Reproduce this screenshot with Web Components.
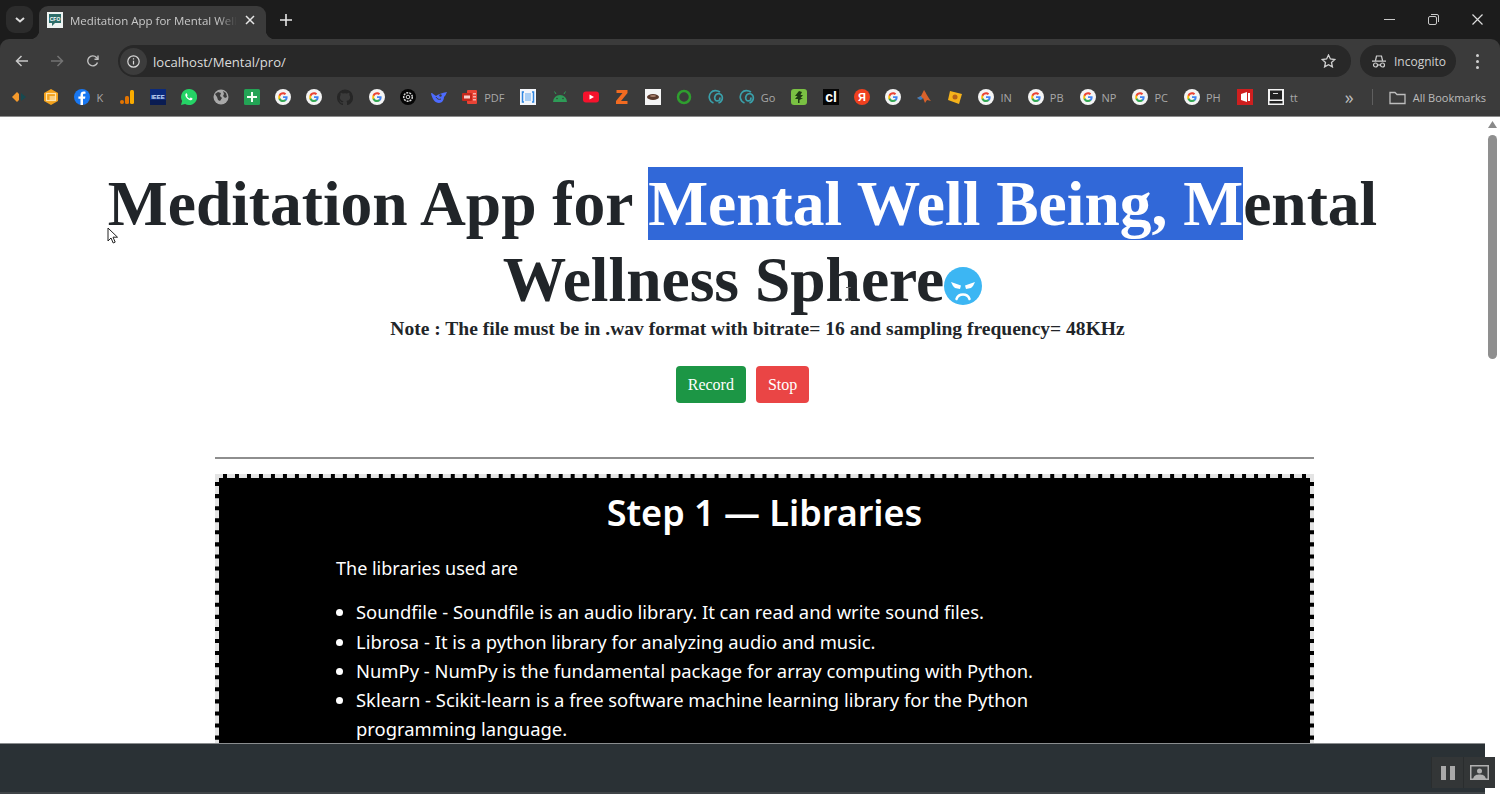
<!DOCTYPE html>
<html>
<head>
<meta charset="utf-8">
<title>Meditation App for Mental Well Being</title>
<style>
  html, body { margin: 0; padding: 0; width: 1500px; height: 794px; overflow: hidden; background: #fff; }
</style>
</head>
<body>
<browser-window>
  <tab-strip slot="tabs" title-text="Meditation App for Mental Well"></tab-strip>
  <nav-toolbar slot="toolbar" url="localhost/Mental/pro/"></nav-toolbar>
  <bookmarks-bar slot="bookmarks"></bookmarks-bar>
  <meditation-page slot="page"></meditation-page>
  <page-scrollbar slot="scrollbar"></page-scrollbar>
  <recorder-bar slot="overlay"></recorder-bar>
</browser-window>

<script>
// Google "G" used by many bookmarks
const G = `<svg viewBox="0 0 16 16" width="16" height="16"><circle cx="8" cy="8" r="8" fill="#f4f4f4"/><path d="M12.6 8.2c0-.4 0-.7-.1-1H8v1.900h2.600c-.1.600-.5 1.200-1 1.500v1.200h1.600c1-.9 1.400-2.100 1.400-3.600z" fill="#4285f4"/><path d="M8 13c1.300 0 2.400-.4 3.200-1.200l-1.600-1.200c-.4.300-1 .5-1.600.5-1.300 0-2.300-.8-2.700-2H3.700v1.300C4.500 12 6.100 13 8 13z" fill="#34a853"/><path d="M5.300 9.100c-.2-.6-.2-1.200 0-1.800V6H3.700c-.6 1.300-.6 2.900 0 4.400z" fill="#fbbc05"/><path d="M8 5.300c.7 0 1.300.2 1.800.7l1.400-1.400C10.300 3.800 9.200 3.300 8 3.300c-1.900 0-3.500 1-4.300 2.700l1.600 1.300c.4-1.200 1.400-2 2.700-2z" fill="#ea4335"/></svg>`;

const svg = (body) => `<svg viewBox="0 0 16 16" width="16" height="16">${body}</svg>`;

const ICONS = {
  google: G,
  diamonds: svg('<path d="M0 8l5-5 2 2v6l-2 2z" fill="#f59a2c"/><path d="M9 4l5 4-5 4z" fill="#17494f"/>'),
  slides: svg('<path d="M8 0l7 4v8l-7 4-7-4V4z" fill="#f3a11b"/><rect x="3.500" y="4.500" width="9" height="7" fill="none" stroke="#fde3ad" stroke-width="1.200"/><rect x="6.500" y="7" width="6" height="4.500" fill="#fde3ad" opacity=".7"/>'),
  facebook: svg('<circle cx="8" cy="8" r="8" fill="#1877f2"/><path d="M9 16V9.800h2l.4-2.400H9V6c0-.7.300-1.200 1.300-1.200h1.200V2.700C11 2.600 10.400 2.500 9.800 2.500c-2 0-3.300 1.200-3.300 3.300v1.600H4.400v2.400h2.100V16z" fill="#fff"/>'),
  analytics: svg('<rect x="11" y="1" width="4" height="14" rx="1.500" fill="#f9ab00"/><rect x="6" y="7" width="4" height="8" rx="1.500" fill="#e37400"/><circle cx="3" cy="13" r="2" fill="#e37400"/>'),
  ieee: `<svg viewBox="0 0 16 16" width="16" height="16"><rect width="16" height="16" fill="#0b2a7c"/><rect y="11" width="16" height="5" fill="#0a1c52"/><text x="8" y="9.500" font-family="Liberation Sans" font-size="6" font-weight="700" fill="#cfe0ff" text-anchor="middle">IEEE</text></svg>`,
  whatsapp: svg('<path d="M8 0a8 8 0 0 0-6.900 12L0 16l4.100-1.100A8 8 0 1 0 8 0z" fill="#25d366"/><path d="M5.700 4.200c-.2 0-.5.100-.8.400-.8.800-.8 2 .1 3.400 1.100 1.700 2.400 2.700 4 3.200 1.100.3 2-.1 2.400-.9.200-.4.200-.8.100-.9l-1.600-.8c-.2-.1-.3 0-.5.200l-.5.600c-.1.200-.3.200-.5.100-1-.4-1.700-1-2.300-2-.1-.2-.1-.3.100-.5l.3-.4c.1-.2.100-.3 0-.5l-.6-1.500c-.1-.3-.3-.4-.6-.4z" fill="#fff"/>'),
  globe: svg('<circle cx="8" cy="8" r="7.500" fill="#a9a9a9"/><path d="M2 5l3-2 3 1-1 3 2 2-2 3-2-1-1-3zM10 2l3 2 1 4-2 1-2-2 1-2z" fill="#3c3c3c"/>'),
  sheet: svg('<rect width="16" height="16" rx="1.500" fill="#23a455"/><path d="M7 3h2v4h4v2H9v4H7V9H3V7h4z" fill="#f4fff6"/>'),
  github: svg('<path d="M8 .5a8 8 0 0 0-2.500 15.600c.4 0 .5-.2.5-.4v-1.400c-2.200.5-2.700-1-2.700-1-.4-.9-.9-1.200-.9-1.200-.7-.5.100-.5.100-.5.800.1 1.200.8 1.200.8.700 1.200 1.900.9 2.300.7.100-.5.300-.9.500-1.100-1.800-.2-3.600-.9-3.600-4 0-.9.300-1.600.8-2.100-.1-.2-.4-1 .1-2.100 0 0 .7-.2 2.200.8a7.600 7.600 0 0 1 4 0c1.500-1 2.200-.8 2.200-.8.400 1.100.2 1.900.1 2.100.5.600.8 1.300.8 2.100 0 3.100-1.900 3.700-3.700 3.900.3.300.6.800.6 1.500v2.300c0 .2.100.5.600.4A8 8 0 0 0 8 .5z" fill="#262626"/>'),
  openai: svg('<circle cx="8" cy="8" r="8" fill="#050505"/><circle cx="8" cy="8" r="4.300" fill="none" stroke="#d8d8d8" stroke-width="1.500" stroke-dasharray="2 1"/><circle cx="8" cy="8" r="1.800" fill="none" stroke="#d8d8d8"/>'),
  deepseek: svg('<path d="M0 4c2 0 3 2 5 3 2-2 6-3 11-4-1 2-1 3-3 5 0 3-2 6-5 6-4 0-7-4-8-10z" fill="#4d6bfe"/><circle cx="9.500" cy="6.500" r="1.200" fill="#3c3c3c"/><path d="M5 8c1 2 3 3 5 2" stroke="#3c3c3c" fill="none"/>'),
  pdf: svg('<rect x="5" y="1" width="10" height="14" rx="1" fill="#e94335"/><rect x="0" y="4" width="10" height="8" rx="1" fill="#c5281c"/><rect x="11" y="4" width="3" height="1.500" fill="#f7b0a9"/><rect x="11" y="7" width="3" height="1.500" fill="#f7b0a9"/><rect x="11" y="10" width="3" height="1.500" fill="#f7b0a9"/><rect x="2" y="6.500" width="6" height="3" fill="#f9cfcb"/>'),
  brackets: svg('<rect width="16" height="16" fill="#f3f6fb"/><path d="M4 3H2.500v10H4M12 3h1.500v10H12" fill="none" stroke="#2f86e0" stroke-width="1.500"/><rect x="5" y="4" width="6" height="8" fill="#a9cff5"/>'),
  android: svg('<path d="M1 13a7 7 0 0 1 14 0z" fill="#2e9b57"/><path d="M4 5L2.500 2.500M12 5l1.500-2.500" stroke="#2e9b57" stroke-width="1"/><circle cx="5" cy="9.500" r=".8" fill="#3c3c3c"/><circle cx="11" cy="9.500" r=".8" fill="#3c3c3c"/>'),
  youtube: svg('<rect y="2.500" width="16" height="11" rx="3" fill="#f6122c"/><path d="M6.500 5.500L11 8l-4.500 2.500z" fill="#fff"/>'),
  zed: svg('<path d="M2.500 1h11v3L7 12h6.500v3H2v-3l6.500-8h-6z" fill="#f26b21"/>'),
  bowl: svg('<rect width="16" height="16" fill="#f5f5f5"/><ellipse cx="8" cy="8" rx="6" ry="3" fill="#5b3a2c"/><ellipse cx="8" cy="7" rx="3" ry="1" fill="#a8806c"/>'),
  ring: svg('<circle cx="8" cy="8" r="6" fill="none" stroke="#2f9e2f" stroke-width="2.500"/>'),
  swirl: svg('<path d="M5.500 14A6.500 6.500 0 0 1 3 3.500C5 1 9 1 12 3M10.500 14c3-1 4.500-4 3.500-7-.6-1.800-3-3-5-2-2.200 1.100-3 4-1.600 6 .9 1.200 2.800 1.300 3.800.2.800-.9.800-2 .3-2.700" fill="none" stroke="#3aa0aa" stroke-width="1.700"/>'),
  leaf: svg('<rect width="16" height="16" rx="3" fill="#7ac143"/><path d="M8 2L4 7h2.500L4 10h3v4h1.500v-3L12 9H9.500L12 6H9.500L11 3z" fill="#1f3a14"/>'),
  cl: `<svg viewBox="0 0 16 16" width="16" height="16"><rect width="16" height="16" fill="#050505"/><text x="8" y="13" font-family="Liberation Sans" font-size="14" font-weight="700" fill="#fff" text-anchor="middle">cl</text></svg>`,
  yandex: `<svg viewBox="0 0 16 16" width="16" height="16"><circle cx="8" cy="8" r="8" fill="#f0401f"/><text x="8" y="12" font-family="Liberation Sans" font-size="11" font-weight="700" fill="#fff" text-anchor="middle">Я</text></svg>`,
  matlab: svg('<path d="M1 9l4-2 3-6c1 1 3 6 7 11l-4-1-2 3-2-5z" fill="#d9622b"/><path d="M1 9l4-2 2 3-3 1z" fill="#3f7dbb"/>'),
  note: svg('<path d="M3 2l12 3-3 10-11-4z" fill="#f5b21b"/><circle cx="8" cy="8" r="2.500" fill="#b5611a"/>'),
  office: svg('<rect width="16" height="16" fill="#cf1f1f"/><path d="M4 5l6-2v10l-6-2zM11 4h2v8h-2z" fill="#fff"/>'),
  screen: svg('<rect width="16" height="16" fill="#f3f3f3"/><rect x="2" y="1.500" width="12" height="9" fill="#222"/><rect x="1.500" y="12" width="13" height="2.500" fill="#222"/><rect x="5" y="4" width="5" height="1" fill="#ddd"/>')
};

class BookmarkItem extends HTMLElement {
  constructor() {
    super();
    this.attachShadow({ mode: 'open' });
  }
  connectedCallback() {
    const icon = ICONS[this.getAttribute('icon')] || '';
    const label = this.getAttribute('label');
    this.shadowRoot.innerHTML = `
      <style>
        :host { display: flex; align-items: center; gap: 6px; height: 16px; flex: none; }
        svg { display: block; }
        span { font: 11px "Open Sans", sans-serif; color: #a8a8a8; white-space: nowrap; padding-right: .8px; }
      </style>
      ${icon}${label ? `<span>${label}</span>` : ''}
    `;
  }
}
customElements.define('bookmark-item', BookmarkItem);

class BookmarksBar extends HTMLElement {
  constructor() {
    super();
    this.attachShadow({ mode: 'open' });
  }
  connectedCallback() {
    const items = [
      ['diamonds'], ['slides'], ['facebook', 'K'], ['analytics'], ['ieee'], ['whatsapp'], ['globe'], ['sheet'],
      ['google'], ['google'], ['github'], ['google'], ['openai'], ['deepseek'], ['pdf', 'PDF'], ['brackets'],
      ['android'], ['youtube'], ['zed'], ['bowl'], ['ring'], ['swirl'], ['swirl', 'Go'], ['leaf'], ['cl'],
      ['yandex'], ['google'], ['matlab'], ['note'], ['google', 'IN'], ['google', 'PB'], ['google', 'NP'],
      ['google', 'PC'], ['google', 'PH'], ['office'], ['screen', 'tt']
    ];
    this.shadowRoot.innerHTML = `
      <style>
        :host { display: flex; align-items: center; height: 28px; padding: 0 14px 5px 12px; background: #3b3b3b; border-bottom: 1px solid #8c8c8c; box-sizing: content-box; }
        .items { display: flex; align-items: center; gap: 15.200px; flex: 1; }
        .more { color: #bdbdbd; font: 18px "Open Sans", sans-serif; margin-right: 18px; }
        .sep { width: 1px; height: 16px; background: #5f5f5f; margin-right: 16px; }
        .all { display: flex; align-items: center; gap: 7px; font: 11px "Open Sans", sans-serif; color: #bdbdbd; }
      </style>
      <div class="items">
        ${items.map(([i, l]) => `<bookmark-item icon="${i}"${l ? ` label="${l}"` : ''}></bookmark-item>`).join('')}
      </div>
      <span class="more">»</span>
      <span class="sep"></span>
      <span class="all">
        <svg width="17" height="15" viewBox="0 0 17 15" fill="none" stroke="#bdbdbd" stroke-width="1.300"><path d="M1 2.500h5l2 2h8v9H1z"/></svg>
        All Bookmarks
      </span>
    `;
  }
}
customElements.define('bookmarks-bar', BookmarksBar);

class TabStrip extends HTMLElement {
  constructor() {
    super();
    this.attachShadow({ mode: 'open' });
  }
  connectedCallback() {
    const title = this.getAttribute('title-text');
    this.shadowRoot.innerHTML = `
      <style>
        :host { display: flex; align-items: flex-end; height: 39px; background: #1c1c1c; padding-left: 6px; box-sizing: border-box; }
        .list { width: 27px; height: 27px; margin-bottom: 6px; border-radius: 9px; background: #2c2c2c; display: flex; align-items: center; justify-content: center; }
        .tab { position: relative; width: 227px; height: 33px; margin-left: 6px; background: #3b3b3b; border-radius: 9px 9px 0 0; display: flex; align-items: center; padding: 0 11px 5px 8px; box-sizing: border-box; }
        .tab::before, .tab::after { content: ""; position: absolute; bottom: 0; width: 9px; height: 9px; background: radial-gradient(circle at 0 0, transparent 9px, #3b3b3b 9.500px); }
        .tab::before { left: -9px; }
        .tab::after { right: -9px; transform: scaleX(-1); }
        .fav { width: 16px; height: 16px; flex: none; }
        .title { flex: 1; margin-left: 7px; overflow: hidden; white-space: nowrap; font: 11.500px "Open Sans", sans-serif; color: #c9c9c9; -webkit-mask-image: linear-gradient(90deg, #000 88%, transparent 100%); mask-image: linear-gradient(90deg, #000 88%, transparent 100%); }
        .close { margin-left: 8px; flex: none; display: block; }
        .plus { margin-left: 14px; margin-bottom: 13px; display: block; }
        .spacer { flex: 1; }
        .win { display: flex; align-self: stretch; align-items: center; gap: 33px; padding-right: 17px; padding-bottom: 1px; }
      </style>
      <div class="list"><svg width="10" height="6" viewBox="0 0 10 6" fill="none" stroke="#dcdcdc" stroke-width="2"><path d="M1 1l4 3.500L9 1"/></svg></div>
      <div class="tab">
        <svg class="fav" viewBox="0 0 16 16"><rect width="16" height="16" fill="#eef3f2"/><path d="M2 2h12v9H8l-3 3v-3H2z" fill="#2d6e6a"/><text x="8" y="8.500" font-family="Liberation Sans" font-size="5" font-weight="700" fill="#fff" text-anchor="middle">CFO</text></svg>
        <span class="title">${title}</span>
        <svg class="close" width="10" height="10" viewBox="0 0 10 10" stroke="#e6e6e6" stroke-width="1.500"><path d="M1 1l8 8M9 1l-8 8"/></svg>
      </div>
      <svg class="plus" width="12" height="12" viewBox="0 0 12 12" stroke="#e6e6e6" stroke-width="1.600"><path d="M6 0v12M0 6h12"/></svg>
      <span class="spacer"></span>
      <div class="win">
        <svg width="11" height="11" viewBox="0 0 11 11" stroke="#c8c8c8"><path d="M0 5.500h11"/></svg>
        <svg width="11" height="11" viewBox="0 0 11 11" fill="none" stroke="#c8c8c8"><rect x=".5" y="2.500" width="8" height="8" rx="1.500"/><path d="M3 .5h6a1.500 1.500 0 0 1 1.500 1.500v6"/></svg>
        <svg width="11" height="11" viewBox="0 0 11 11" stroke="#dcdcdc" stroke-width="1.200"><path d="M.5.5l10 10M10.500.5l-10 10"/></svg>
      </div>
    `;
  }
}
customElements.define('tab-strip', TabStrip);

class NavToolbar extends HTMLElement {
  constructor() {
    super();
    this.attachShadow({ mode: 'open' });
  }
  connectedCallback() {
    const url = this.getAttribute('url');
    this.shadowRoot.innerHTML = `
      <style>
        :host { display: flex; align-items: center; height: 44px; background: #3b3b3b; padding: 0 21px 0 15px; box-sizing: border-box; border-radius: 9px 9px 0 0; }
        .navs { display: flex; align-items: center; gap: 23px; width: 103px; flex: none; }
        svg { display: block; flex: none; }
        .omni { display: flex; align-items: center; flex: 1; height: 32px; background: #282828; border-radius: 16px; padding: 0 15px 0 2px; box-sizing: border-box; }
        .info { width: 27px; height: 27px; border-radius: 50%; background: #3c3c3c; display: flex; align-items: center; justify-content: center; }
        .url { flex: 1; margin: 1px 0 0 6px; font: 13.100px "Open Sans", sans-serif; color: #dcdcdc; }
        .pill { display: flex; align-items: center; gap: 8px; width: 96px; height: 32px; margin-left: 9px; padding-left: 12px; box-sizing: border-box; background: #282828; border-radius: 16px; font: 12px "Open Sans", sans-serif; color: #d0d0d0; flex: none; }
        .menu { margin-left: 20px; }
      </style>
      <div class="navs">
        <svg width="13" height="12" viewBox="0 0 13 12" fill="none" stroke="#c8c8c8" stroke-width="1.500"><path d="M13 6H1.500M6.500 1l-5 5 5 5"/></svg>
        <svg width="13" height="12" viewBox="0 0 13 12" fill="none" stroke="#737373" stroke-width="1.500"><path d="M0 6h11.500M6.500 1l5 5-5 5"/></svg>
        <svg width="12" height="12" viewBox="0 0 12 12" fill="none" stroke="#c0c0c0" stroke-width="1.400"><path d="M10.500 7.500A5 5 0 1 1 9.500 2.500L11 4"/><path d="M11 .5V4.200H7.500" /></svg>
      </div>
      <div class="omni">
        <span class="info"><svg width="13" height="13" viewBox="0 0 13 13" fill="none" stroke="#d8d8d8" stroke-width="1.200"><circle cx="6.500" cy="6.500" r="5.700"/><path d="M6.500 5.800v3.700M6.500 3.300v1.300"/></svg></span>
        <span class="url">${url}</span>
        <svg width="15" height="14" viewBox="0 0 15 14" fill="none" stroke="#d0d0d0" stroke-width="1.300"><path d="M7.500 1l1.900 4 4.400.5-3.300 3 .9 4.400-3.900-2.200-3.900 2.200.9-4.400-3.300-3 4.400-.5z"/></svg>
      </div>
      <div class="pill">
        <svg width="14" height="13" viewBox="0 0 14 13" fill="none" stroke="#d0d0d0" stroke-width="1.200"><path d="M3.500 5.500L4.500 1h5l1 4.500M0 6.200h14"/><circle cx="3.500" cy="10" r="2"/><circle cx="10.500" cy="10" r="2"/><path d="M5.500 10h3"/></svg>
        Incognito
      </div>
      <svg class="menu" width="3" height="15" viewBox="0 0 3 15" fill="#d0d0d0"><circle cx="1.500" cy="1.500" r="1.500"/><circle cx="1.500" cy="7.500" r="1.500"/><circle cx="1.500" cy="13.500" r="1.500"/></svg>
    `;
  }
}
customElements.define('nav-toolbar', NavToolbar);

class ActionButton extends HTMLElement {
  constructor() {
    super();
    this.attachShadow({ mode: 'open' });
  }
  connectedCallback() {
    this.shadowRoot.innerHTML = `
      <style>
        :host { display: block; }
        button { display: block; height: 37px; padding: 0 12px; border: 0; border-radius: 4px; color: #fff; background: var(--btn-bg); font: 16px "Liberation Serif", serif; }
      </style>
      <button><slot></slot></button>
    `;
  }
}
customElements.define('action-button', ActionButton);

class StepCard extends HTMLElement {
  constructor() {
    super();
    this.attachShadow({ mode: 'open' });
  }
  connectedCallback() {
    this.shadowRoot.innerHTML = `
      <style>
        :host { display: block; box-sizing: border-box; background: #000; border: 4px dashed #e4e4e4; color: #fff; font-family: "Noto Sans", sans-serif; padding-bottom: 60px; }
        h2 { margin: 0; padding-top: 11px; text-align: center; font-size: 36px; line-height: 48px; font-weight: 600; }
        .body { margin: 17px 0 0 117px; width: 720px; font-size: 18.400px; line-height: 29.300px; }
        .body ::slotted(p) { margin: 0 0 14px; font-size: 18px; }
        .body ::slotted(ul) { margin: 0; padding-left: 20px; }
      </style>
      <h2>${this.getAttribute('heading')}</h2>
      <div class="body"><slot></slot></div>
    `;
  }
}
customElements.define('step-card', StepCard);

class MeditationPage extends HTMLElement {
  constructor() {
    super();
    this.attachShadow({ mode: 'open' });
  }
  connectedCallback() {
    this.shadowRoot.innerHTML = `
      <style>
        :host { display: block; height: 100%; overflow: hidden; background: #fff; color: #212529; position: relative; }
        h1 { margin: 0; padding-top: 49px; text-align: center; font: 700 63.500px/76px "Liberation Serif", serif; }
        h1 mark { background: #3168d8; color: #fff; padding: 1px 0; }
        .emoji { display: inline-block; vertical-align: -4px; width: 38px; height: 38px; }
        h3 { margin: -1px 0 0 30px; text-align: center; font: 700 19.550px/24px "Liberation Serif", serif; }
        .actions { display: flex; justify-content: center; gap: 10px; margin-top: 25px; }
        .rec { --btn-bg: #1c9645; }
        .stop { --btn-bg: #ea4545; }
        hr { width: 1099px; height: 2px; margin: 54px 0 0 215px; border: 0; background: #8e8e8e; }
        step-card { width: 1099px; margin: 15px 0 0 215px; }
        .pointer { position: absolute; left: 107px; top: 110px; }
        .ibeam { position: absolute; left: 845px; top: 170px; }
      </style>
      <h1><span>Meditation App for </span><mark>Mental Well Being, M</mark><span>ental</span> <span>Wellness Sphere</span><svg class="emoji" viewBox="0 0 38 38"><circle cx="19" cy="19" r="19" fill="#3cb6f3"/><path d="M7 15l10 3.500-1 3.500-5-1-2-2zM31 15l-10 3.500 1 3.500 5-1 2-2z" fill="#fff"/><path d="M12.500 32c2-6 11-6 13 0" fill="none" stroke="#fff" stroke-width="2.500" stroke-linecap="round"/></svg></h1>
      <h3>Note : The file must be in .wav format with bitrate= 16 and sampling frequency= 48KHz</h3>
      <div class="actions">
        <action-button class="rec">Record</action-button>
        <action-button class="stop">Stop</action-button>
      </div>
      <hr>
      <step-card heading="Step 1 — Libraries">
        <p>The libraries used are</p>
        <ul>
          <li>Soundfile - Soundfile is an audio library. It can read and write sound files.</li>
          <li>Librosa - It is a python library for analyzing audio and music.</li>
          <li>NumPy - NumPy is the fundamental package for array computing with Python.</li>
          <li>Sklearn - Scikit-learn is a free software machine learning library for the Python programming language.</li>
        </ul>
      </step-card>
      <svg class="pointer" width="12" height="18" viewBox="0 0 12 18" fill="#fff" stroke="#222" stroke-width="1"><path d="M1 1v13l3-3 2.200 5 2-.9L6 10.200h4.500z"/></svg>
      <svg class="ibeam" width="7" height="14" viewBox="0 0 7 14" fill="none" stroke="#666" stroke-width="1"><path d="M1 .5h5M3.500.5v13M1 13.500h5"/></svg>
    `;
  }
}
customElements.define('meditation-page', MeditationPage);

class PageScrollbar extends HTMLElement {
  constructor() {
    super();
    this.attachShadow({ mode: 'open' });
  }
  connectedCallback() {
    this.shadowRoot.innerHTML = `
      <style>
        :host { display: block; width: 15px; height: 100%; background: #fff; box-sizing: border-box; padding-top: 4px; }
        svg { display: block; margin: 0 auto; }
        .thumb { width: 9px; height: 224px; margin: 7px 0 0 3px; border-radius: 5px; background: #8f8f8f; }
      </style>
      <svg width="9" height="7" viewBox="0 0 9 7" fill="#8a8a8a"><path d="M4.500 0L9 7H0z"/></svg>
      <div class="thumb"></div>
    `;
  }
}
customElements.define('page-scrollbar', PageScrollbar);

class RecorderBar extends HTMLElement {
  constructor() {
    super();
    this.attachShadow({ mode: 'open' });
  }
  connectedCallback() {
    this.shadowRoot.innerHTML = `
      <style>
        :host { display: flex; align-items: center; justify-content: flex-end; position: absolute; left: 0; top: 743px; width: 1485px; height: 51px; box-sizing: border-box; background: #2a3135; border-top: 1px solid #8a8d8f; border-bottom: 2px solid #3f4447; }
        .controls { display: flex; position: absolute; right: -10px; top: 13px; height: 31px; }
        .btn { width: 31px; height: 31px; background: #333637; display: flex; align-items: center; justify-content: center; border-left: 1px solid #2a2d2e; }
      </style>
      <div class="controls">
        <div class="btn"><svg width="14" height="14" viewBox="0 0 14 14" fill="#a9a9a9"><rect x="0" width="5" height="14"/><rect x="9" width="5" height="14"/></svg></div>
        <div class="btn"><svg width="19" height="15" viewBox="0 0 19 15"><rect x=".75" y=".75" width="17.500" height="13.500" fill="#3a3d3e" stroke="#b0b0b0" stroke-width="1.500"/><circle cx="9.500" cy="6" r="2.500" fill="#b0b0b0"/><path d="M3 14c1-4 4-4.500 6.500-4.500S15 10 16 14z" fill="#b0b0b0"/></svg></div>
      </div>
    `;
  }
}
customElements.define('recorder-bar', RecorderBar);

class BrowserWindow extends HTMLElement {
  constructor() {
    super();
    this.attachShadow({ mode: 'open' });
  }
  connectedCallback() {
    this.shadowRoot.innerHTML = `
      <style>
        :host { display: flex; flex-direction: column; position: relative; width: 1500px; height: 794px; overflow: hidden; background: #1c1c1c; }
        .content { display: flex; flex: 1; min-height: 0; background: #fff; }
        ::slotted([slot="page"]) { width: 1485px; }
      </style>
      <slot name="tabs"></slot>
      <slot name="toolbar"></slot>
      <slot name="bookmarks"></slot>
      <div class="content">
        <slot name="page"></slot>
        <slot name="scrollbar"></slot>
      </div>
      <slot name="overlay"></slot>
    `;
  }
}
customElements.define('browser-window', BrowserWindow);
</script>
</body>
</html>
